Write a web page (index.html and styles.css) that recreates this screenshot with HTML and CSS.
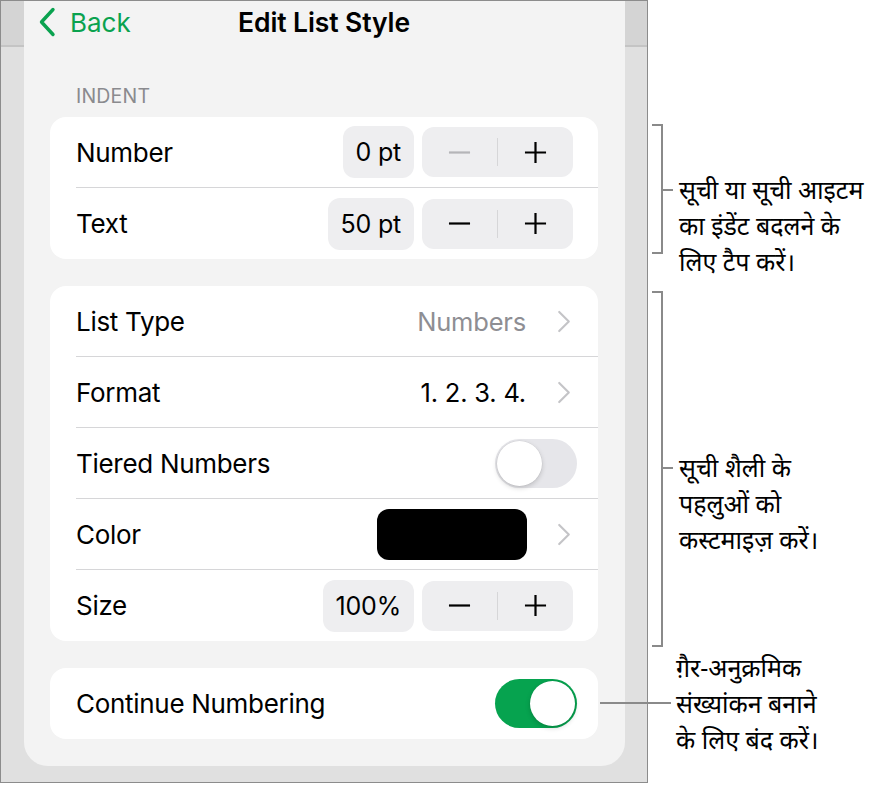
FILE: index.html
```html
<!DOCTYPE html>
<html lang="hi">
<head>
<meta charset="utf-8">
<title>Edit List Style</title>
<link rel="stylesheet" href="styles.css">
</head>
<body>
<div class="stage">
  <div class="device">
    <div class="popover">
      <div class="navbar">
        <div class="back">
          <svg class="back-chev" viewBox="0 0 18 30" aria-hidden="true"><path d="M15 2.5 L3.5 15 L15 27.5"/></svg>
          <span>Back</span>
        </div>
        <div class="title">Edit List Style</div>
        <div class="nav-spacer"></div>
      </div>

      <div class="section-label">INDENT</div>
      <div class="card">
        <div class="row">
          <span class="label">Number</span>
          <div class="controls">
            <span class="value-pill">0 pt</span>
            <div class="stepper">
              <span class="step disabled"><svg viewBox="0 0 24 24"><path d="M1 12 H23"/></svg></span>
              <span class="step-div"></span>
              <span class="step"><svg viewBox="0 0 24 24"><path d="M1 12 H23 M12 1 V23"/></svg></span>
            </div>
          </div>
        </div>
        <div class="row">
          <span class="label">Text</span>
          <div class="controls">
            <span class="value-pill">50 pt</span>
            <div class="stepper">
              <span class="step"><svg viewBox="0 0 24 24"><path d="M1 12 H23"/></svg></span>
              <span class="step-div"></span>
              <span class="step"><svg viewBox="0 0 24 24"><path d="M1 12 H23 M12 1 V23"/></svg></span>
            </div>
          </div>
        </div>
      </div>

      <div class="card">
        <div class="row">
          <span class="label">List Type</span>
          <div class="controls">
            <span class="detail muted">Numbers</span>
            <svg class="chev" viewBox="0 0 14 24"><path d="M2 2 L12 12 L2 22"/></svg>
          </div>
        </div>
        <div class="row">
          <span class="label">Format</span>
          <div class="controls">
            <span class="detail">1. 2. 3. 4.</span>
            <svg class="chev" viewBox="0 0 14 24"><path d="M2 2 L12 12 L2 22"/></svg>
          </div>
        </div>
        <div class="row">
          <span class="label">Tiered Numbers</span>
          <div class="controls">
            <span class="toggle"><span class="knob"></span></span>
          </div>
        </div>
        <div class="row">
          <span class="label">Color</span>
          <div class="controls">
            <span class="swatch"></span>
            <svg class="chev" viewBox="0 0 14 24"><path d="M2 2 L12 12 L2 22"/></svg>
          </div>
        </div>
        <div class="row">
          <span class="label">Size</span>
          <div class="controls">
            <span class="value-pill">100%</span>
            <div class="stepper">
              <span class="step"><svg viewBox="0 0 24 24"><path d="M1 12 H23"/></svg></span>
              <span class="step-div"></span>
              <span class="step"><svg viewBox="0 0 24 24"><path d="M1 12 H23 M12 1 V23"/></svg></span>
            </div>
          </div>
        </div>
      </div>

      <div class="card">
        <div class="row">
          <span class="label">Continue Numbering</span>
          <div class="controls">
            <span class="toggle on"><span class="knob"></span></span>
          </div>
        </div>
      </div>
    </div>
  </div>

  <div class="bracket b1"></div>
  <div class="tick t1"></div>
  <div class="callout c1">सूची या सूची आइटम<br>का इंडेंट बदलने के<br>लिए टैप करें।</div>

  <div class="bracket b2"></div>
  <div class="tick t2"></div>
  <div class="callout c2">सूची शैली के<br>पहलुओं को<br>कस्टमाइज़ करें।</div>

  <div class="leader"></div>
  <div class="callout c3">ग़ैर-अनुक्रमिक<br>संख्यांकन बनाने<br>के लिए बंद करें।</div>
</div>
</body>
</html>
```

FILE: styles.css
```css
* { box-sizing: border-box; }

html, body {
  margin: 0;
  padding: 0;
  background: #ffffff;
}

body {
  font-family: Inter, "Liberation Sans", sans-serif;
  color: #000;
}

.stage {
  position: relative;
  width: 894px;
  height: 785px;
}

.device {
  width: 648px;
  height: 783px;
  border: 1px solid #8c8c8c;
  background: linear-gradient(to bottom, #d4d4d4 0, #d4d4d4 44px, #c4c4c4 44px, #c4c4c4 46px, #e0e0e0 46px, #e0e0e0 100%);
  overflow: hidden;
}

.popover {
  margin-left: 23px;
  width: 601px;
  height: 765px;
  background: #f3f3f3;
  border-radius: 0 0 24px 24px;
  padding: 0 27px 0 26px;
  display: flex;
  flex-direction: column;
}

.navbar {
  height: 44px;
  display: grid;
  grid-template-columns: 1fr auto 1fr;
  align-items: center;
}

.back {
  display: flex;
  align-items: center;
  margin-left: -12px;
  color: #0aa24f;
  font-size: 26px;
  gap: 14px;
}

.back-chev {
  width: 18px;
  height: 30px;
  fill: none;
  stroke: #0aa24f;
  stroke-width: 3.4;
  stroke-linecap: round;
  stroke-linejoin: round;
}

.title {
  font-size: 26.5px;
  font-weight: 600;
  letter-spacing: -0.1px;
  text-align: center;
}

.section-label {
  margin: 43px 0 11px 26px;
  font-size: 19.5px;
  line-height: 20px;
  color: #8a8a8e;
  letter-spacing: 0.2px;
}

.card {
  background: #ffffff;
  border-radius: 16px;
  padding-left: 26px;
  margin-bottom: 27px;
}

.row {
  height: 71px;
  display: flex;
  align-items: center;
  justify-content: space-between;
  padding-right: 25px;
  border-bottom: 1px solid #d6d6d8;
}

.row:last-child {
  border-bottom: none;
}

.label {
  font-size: 26px;
  letter-spacing: -0.3px;
}

.controls {
  display: flex;
  align-items: center;
}

.value-pill {
  height: 52px;
  display: flex;
  align-items: center;
  padding: 0 13px;
  background: #eeeef0;
  border-radius: 12px;
  font-size: 25px;
  letter-spacing: -0.2px;
  margin-right: 8px;
}

.stepper {
  width: 151px;
  height: 50px;
  background: #eeeef0;
  border-radius: 12px;
  display: flex;
  align-items: center;
}

.step {
  flex: 1;
  display: flex;
  justify-content: center;
  align-items: center;
}

.step svg {
  width: 23px;
  height: 23px;
  fill: none;
  stroke: #000;
  stroke-width: 2.3;
}

.step.disabled svg {
  stroke: #b5b5b8;
}

.step-div {
  width: 1.5px;
  height: 28px;
  background: #d6d6d8;
}

.detail {
  font-size: 25.5px;
  letter-spacing: -0.2px;
  margin-right: 31px;
}

.detail.muted {
  color: #8e8e93;
}

.chev {
  width: 14px;
  height: 23px;
  fill: none;
  stroke: #c4c4c7;
  stroke-width: 2.2;
  stroke-linecap: round;
  stroke-linejoin: round;
  margin-right: 2px;
}

.swatch {
  width: 150px;
  height: 51px;
  background: #000;
  border-radius: 12px;
  margin-right: 30px;
}

.toggle {
  width: 82px;
  height: 49px;
  border-radius: 25px;
  background: #e6e6ea;
  display: flex;
  align-items: center;
  padding: 2px;
  margin-right: -4px;
}

.knob {
  width: 45px;
  height: 45px;
  border-radius: 50%;
  background: #fff;
  box-shadow: 0 2px 5px rgba(0,0,0,0.18), 0 0 0 0.5px rgba(0,0,0,0.05);
}

.toggle.on {
  background: #06a34f;
  justify-content: flex-end;
}

/* annotations */
.bracket {
  position: absolute;
  left: 652px;
  width: 11px;
  border: 2px solid #8a8a8a;
  border-left: none;
}

.b1 { top: 124px; height: 130px; }
.b2 { top: 291px; height: 356px; }

.tick {
  position: absolute;
  left: 663px;
  width: 10px;
  height: 2px;
  background: #8a8a8a;
}

.t1 { top: 189px; }
.t2 { top: 467px; }

.leader {
  position: absolute;
  left: 600px;
  top: 702px;
  width: 71px;
  height: 2px;
  background: #8a8a8a;
}

.callout {
  position: absolute;
  left: 679px;
  font-family: "Noto Sans", "Liberation Sans", sans-serif;
  font-size: 25px;
  line-height: 36px;
  color: #000;
  white-space: nowrap;
}

.c1 { top: 171px; }
.c2 { top: 449px; }
.c3 { top: 649px; left: 676px; }
```
